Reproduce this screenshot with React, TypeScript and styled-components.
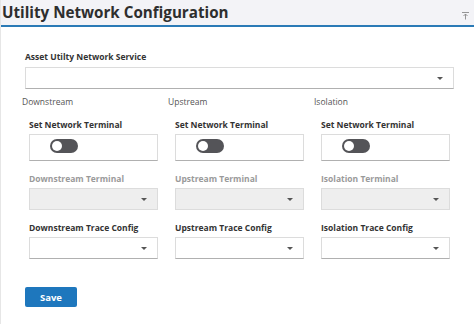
import React from 'react';
import styled, { createGlobalStyle } from 'styled-components';

const GlobalStyle = createGlobalStyle`
  html, body {
    margin: 0;
    padding: 0;
    background: #ffffff;
  }
  body {
    font-family: 'Open Sans', 'Noto Sans', sans-serif;
  }
`;

const colors = {
  text: '#333333',
  muted: '#9a9a9a',
  heading: '#555555',
  border: '#dcdcdc',
  borderDark: '#b0b0b0',
  blue: '#1e77bd',
  headerBg: '#f3f3f7',
};

const Panel = styled.div({
  borderLeft: '1px solid #e6e6e6',
  boxSizing: 'border-box',
  minHeight: 324,
  width: 474,
});

const Header = styled.div({
  alignItems: 'center',
  background: colors.headerBg,
  borderBottom: '2px solid #2b7ab6',
  boxSizing: 'border-box',
  display: 'flex',
  height: 27,
  justifyContent: 'space-between',
  padding: '0 4px 0 1px',
});

const Title = styled.h1({
  color: '#2e2e2e',
  fontSize: 15.2,
  fontWeight: 700,
  margin: '0 0 2px',
});

const Body = styled.div({
  padding: '24px 21px 0 24px',
});

const Label = styled.div<{ disabled?: boolean }>(({ disabled }) => ({
  color: disabled ? colors.muted : colors.text,
  fontSize: 8.5,
  fontWeight: 700,
  height: 12,
  lineHeight: '12px',
  whiteSpace: 'nowrap',
}));

const SelectBox = styled.div<{ disabled?: boolean; wide?: boolean }>(({ disabled, wide }) => ({
  alignItems: 'center',
  background: disabled ? '#eeeeee' : '#ffffff',
  border: `1px solid ${colors.border}`,
  borderBottomColor: disabled ? colors.border : colors.borderDark,
  boxSizing: 'border-box',
  display: 'flex',
  height: 22,
  justifyContent: 'flex-end',
  marginTop: wide ? 4 : 3,
  paddingRight: 10,
  width: wide ? 429 : 129,
}));

const Caret = styled.span({
  borderLeft: '3px solid transparent',
  borderRight: '3px solid transparent',
  borderTop: '3px solid #555555',
  display: 'block',
  height: 0,
  width: 0,
});

const Columns = styled.div({
  display: 'grid',
  gridTemplateColumns: '146px 146px 146px',
  margin: '7px 0 0 -3px',
});

const Column = styled.div({
  display: 'flex',
  flexDirection: 'column',
});

const SectionHeading = styled.div({
  color: colors.heading,
  fontSize: 8.5,
  height: 12,
  lineHeight: '12px',
  marginBottom: 11,
});

const Field = styled.div({
  display: 'flex',
  flexDirection: 'column',
  marginBottom: 12,
  paddingLeft: 7,
});

const ToggleBox = styled.div({
  alignItems: 'flex-start',
  border: `1px solid ${colors.border}`,
  borderBottomColor: colors.borderDark,
  boxSizing: 'border-box',
  display: 'flex',
  height: 27,
  marginTop: 3,
  padding: '4px 0 0 20px',
  width: 129,
});

const Toggle = styled.div({
  background: '#545458',
  borderRadius: 7,
  boxSizing: 'border-box',
  height: 14,
  padding: 2,
  width: 28,
});

const Knob = styled.div({
  background: '#ffffff',
  borderRadius: '50%',
  height: 10,
  width: 10,
});

const SaveButton = styled.button({
  background: colors.blue,
  border: 'none',
  borderRadius: 2,
  color: '#ffffff',
  cursor: 'pointer',
  fontFamily: "'Open Sans', 'Noto Sans', sans-serif",
  fontSize: 9.5,
  fontWeight: 700,
  height: 20,
  marginTop: 16,
  padding: 0,
  width: 52,
});

const IconWrap = styled.span({
  display: 'flex',
  marginTop: 6,
});

const PinIcon = () => (
  <IconWrap>
    <svg width="9" height="9" viewBox="0 0 9 9" fill="none" stroke="#8a8a8a" strokeWidth="0.9">
      <path d="M1 1.5h7" />
      <path d="M4.5 8.5V3" />
      <path d="M2.5 5l2-2 2 2" />
    </svg>
  </IconWrap>
);

const sections = [
  { heading: 'Downstream', key: 'Downstream' },
  { heading: 'Upstream', key: 'Upstream' },
  { heading: 'Isolation', key: 'Isolation' },
];

const App = () => (
  <>
    <GlobalStyle />
    <Panel>
      <Header>
        <Title>Utility Network Configuration</Title>
        <PinIcon />
      </Header>

      <Body>
        <Label>Asset Utilty Network Service</Label>
        <SelectBox wide>
          <Caret />
        </SelectBox>

        <Columns>
          {sections.map(section => (
            <Column key={section.key}>
              <SectionHeading>{section.heading}</SectionHeading>

              <Field>
                <Label>Set Network Terminal</Label>
                <ToggleBox>
                  <Toggle>
                    <Knob />
                  </Toggle>
                </ToggleBox>
              </Field>

              <Field>
                <Label disabled>{section.key} Terminal</Label>
                <SelectBox disabled>
                  <Caret />
                </SelectBox>
              </Field>

              <Field>
                <Label>{section.key} Trace Config</Label>
                <SelectBox>
                  <Caret />
                </SelectBox>
              </Field>
            </Column>
          ))}
        </Columns>

        <SaveButton type="button">Save</SaveButton>
      </Body>
    </Panel>
  </>
);

export default App;
